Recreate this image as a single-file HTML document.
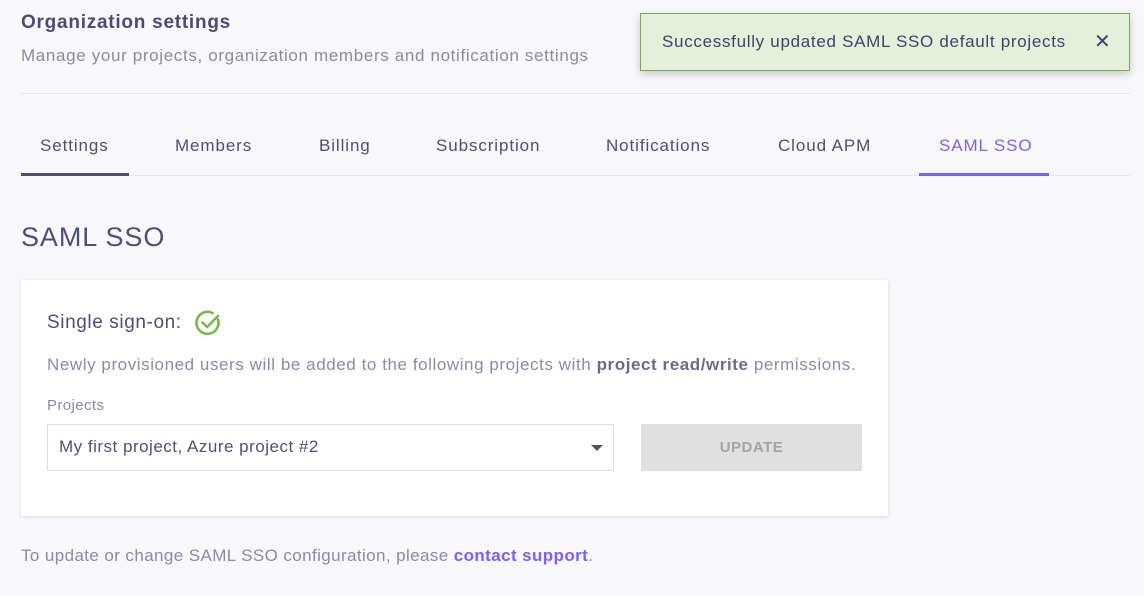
<!DOCTYPE html>
<html><head><meta charset="utf-8"><style>
*{margin:0;padding:0;box-sizing:border-box}
body{width:1144px;height:596px;background:#f8f8fc;font-family:"Liberation Sans",sans-serif;color:#4e4e78;position:relative;overflow:hidden}
.a{position:absolute;white-space:nowrap}
.t{font-size:17px;letter-spacing:0.9px;top:136px}
</style></head><body>
<div class="a" style="left:21px;top:12px;font-size:19px;font-weight:bold;color:#4a4a75;letter-spacing:0.75px">Organization settings</div>
<div class="a" style="left:21px;top:46px;font-size:17px;color:#8a8aa8;letter-spacing:0.65px">Manage your projects, organization members and notification settings</div>
<div class="a" style="left:21px;top:93px;width:1109px;height:1px;background:#e6e6ee"></div>
<div class="a" style="left:21px;top:175px;width:1109px;height:1px;background:#e6e6ee"></div>
<div class="a" style="left:21px;top:173px;width:108px;height:3px;background:#4e4e78"></div>
<div class="a" style="left:919px;top:173px;width:130px;height:3px;background:#7b61ff"></div>
<div class="a t" style="left:40px">Settings</div>
<div class="a t" style="left:175px">Members</div>
<div class="a t" style="left:319px">Billing</div>
<div class="a t" style="left:436px">Subscription</div>
<div class="a t" style="left:606px">Notifications</div>
<div class="a t" style="left:778px">Cloud APM</div>
<div class="a t" style="left:939px;color:#7b61ff">SAML SSO</div>
<div class="a" style="left:640px;top:13px;width:490px;height:58px;background:#e4f0da;border:1px solid #7aa94f;box-shadow:0 3px 8px rgba(0,0,0,.2)"></div>
<div class="a" style="left:662px;top:32px;font-size:17px;color:#3e4468;letter-spacing:0.7px">Successfully updated SAML SSO default projects</div>
<div class="a" style="left:1094px;top:29px;font-size:20px;color:#3e4468">✕</div>
<div class="a" style="left:21px;top:222px;font-size:27px;color:#4e4e78;letter-spacing:0.9px">SAML SSO</div>
<div class="a" style="left:21px;top:280px;width:867px;height:236px;background:#fff;box-shadow:0 1px 4px rgba(0,0,0,.12)"></div>
<div class="a" style="left:47px;top:312px;font-size:19px;letter-spacing:0.6px">Single sign-on:</div>
<svg class="a" style="left:194px;top:309px" width="28" height="28" viewBox="0 0 28 28"><path d="M24 10.5A11 11 0 1 1 18.5 4" fill="none" stroke="#7ab648" stroke-width="2.6" stroke-linecap="round"/><path d="M8.5 13.5l4.5 4.5 11-11" fill="none" stroke="#7ab648" stroke-width="2.6" stroke-linecap="round" stroke-linejoin="round"/></svg>
<div class="a" style="left:47px;top:355px;font-size:17px;color:#8a8aa8;letter-spacing:0.57px">Newly provisioned users will be added to the following projects with <b style="color:#6a6a90">project read/write</b> permissions.</div>
<div class="a" style="left:47px;top:397px;font-size:15px;color:#8a8aa8;letter-spacing:0.4px">Projects</div>
<div class="a" style="left:47px;top:424px;width:567px;height:47px;border:1px solid #dcdce6;background:#fff"></div>
<div class="a" style="left:59px;top:437px;font-size:17px;color:#50507a;letter-spacing:0.5px">My first project, Azure project #2</div>
<div class="a" style="left:591px;top:445px;width:0;height:0;border-left:6px solid transparent;border-right:6px solid transparent;border-top:6px solid #555"></div>
<div class="a" style="left:641px;top:424px;width:221px;height:47px;background:#e0e0e0;color:#a3a3a3;font-size:15px;font-weight:bold;text-align:center;line-height:47px;letter-spacing:0.5px">UPDATE</div>
<div class="a" style="left:21px;top:546px;font-size:17px;color:#8a8aa8;letter-spacing:0.4px">To update or change SAML SSO configuration, please <b style="color:#7b61ff">contact support</b>.</div>
</body></html>
